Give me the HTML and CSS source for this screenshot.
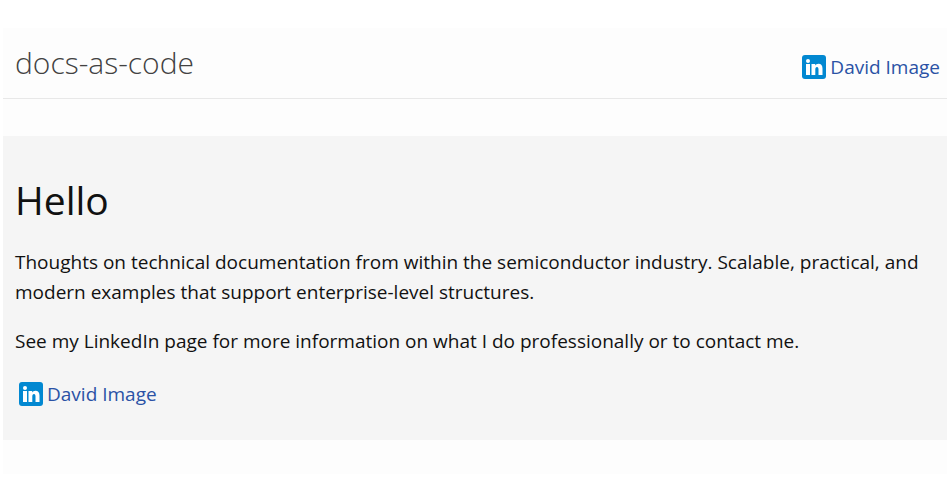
FILE: index.html
```html
<!DOCTYPE html>
<html lang="en">

<head>
  <meta charset="UTF-8" />
  <meta name="viewport" content="width=device-width, initial-scale=1.0" />
  <title>docs-as-code</title>
  <link rel="stylesheet" href="styles.css">
</head>

<body>
  <div class="page">
    <header class="site-header">
      <a class="site-title" href="#">docs-as-code</a>
      <a class="profile-link" href="#">
        <svg class="icon" viewBox="0 0 24 24" aria-hidden="true">
          <rect width="24" height="24" rx="3" fill="#0288d1" />
          <circle cx="6" cy="6" r="2" fill="#fff" />
          <path fill="#fff" d="M4 9h4v11H4zM9.500 9h3.700v1.500c.7-1.100 1.700-1.800 3.200-1.800 2.800 0 4.100 1.800 4.100 4.800V20h-4v-5.500c0-1.500-.4-2.400-1.500-2.400-1.200 0-1.700 1-1.700 2.400V20H9.500z" />
        </svg>
        <span>David Image</span>
      </a>
    </header>

    <main class="intro">
      <h1>Hello</h1>
      <p>Thoughts on technical documentation from within the semiconductor industry. Scalable, practical, and modern examples that support enterprise-level structures.</p>
      <p>See my LinkedIn page for more information on what I do professionally or to contact me.</p>
      <a class="profile-link" href="#">
        <svg class="icon" viewBox="0 0 24 24" aria-hidden="true">
          <rect width="24" height="24" rx="3" fill="#0288d1" />
          <circle cx="6" cy="6" r="2" fill="#fff" />
          <path fill="#fff" d="M4 9h4v11H4zM9.500 9h3.700v1.500c.7-1.100 1.700-1.800 3.200-1.800 2.800 0 4.100 1.800 4.100 4.800V20h-4v-5.500c0-1.500-.4-2.400-1.500-2.400-1.200 0-1.700 1-1.700 2.400V20H9.500z" />
        </svg>
        <span>David Image</span>
      </a>
    </main>
  </div>
</body>

</html>
```

FILE: styles.css
```css
body {
  margin: 0;
  padding: 28px 4px 24px 3px;
  background-color: #fff;
  color: #111;
  font-family: "Segoe UI", "Open Sans", "Noto Sans", sans-serif;
  font-size: 19px;
  line-height: 30px;
}
a {
  color: #2a52a5;
  text-decoration: none;
}

.page {
  background-color: #fdfdfd;
  padding-bottom: 34px;
}

.site-header {
  display: flex;
  justify-content: space-between;
  align-items: flex-end;
  padding: 16px 7px 16px 12px;
  border-bottom: 1px solid #e8e8e8;
}
.site-title {
  color: #424242;
  font-size: 30px;
  font-weight: 300;
  line-height: 38px;
}

.profile-link {
  display: flex;
  align-items: center;
  gap: 4px;
}
.icon {
  width: 24px;
  height: 24px;
}

.intro {
  margin-top: 37px;
  padding: 36px 12px 31px;
  background-color: #f5f5f5;
}
.intro h1 {
  margin: 0 0 19px;
  font-size: 39px;
  font-weight: 400;
  line-height: 56px;
}
.intro p {
  margin: 0 0 19px;
}
.intro .profile-link {
  width: fit-content;
  margin: 23px 0 0 4px;
}
```
